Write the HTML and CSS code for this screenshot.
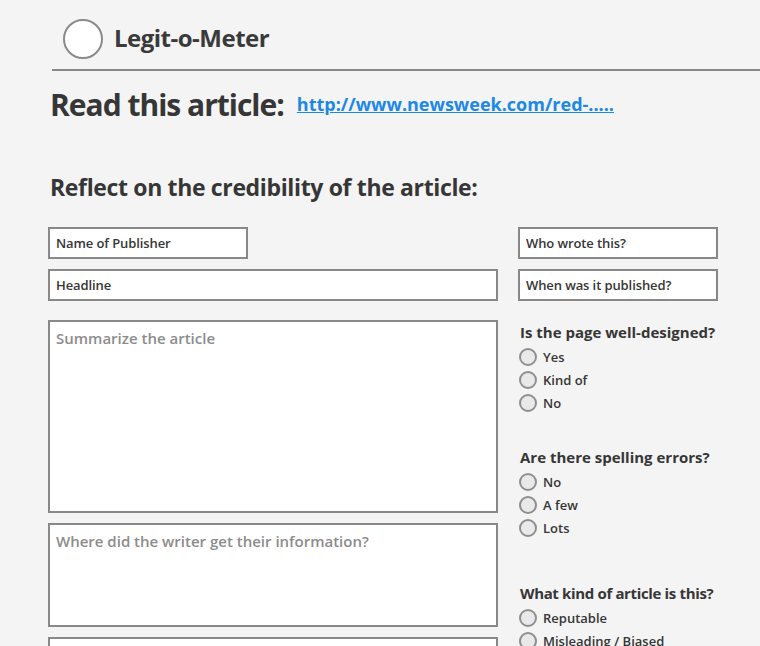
FILE: index.html
```html
<!DOCTYPE html>
<html>
<head>
<meta charset="utf-8">
<link rel="stylesheet" href="styles.css">
</head>
<body>
<header class="top">
  <span class="logo"></span>
  <h1 class="brand">Legit-o-Meter</h1>
</header>
<main class="page">
  <div class="read">
    <h2 class="read-title">Read this article:</h2>
    <a class="read-link" href="#">http://www.newsweek.com/red-.....</a>
  </div>
  <h3 class="reflect">Reflect on the credibility of the article:</h3>
  <div class="cols">
    <div class="left">
      <input class="field short" type="text" value="Name of Publisher">
      <input class="field" type="text" value="Headline">
      <textarea class="area tall" placeholder="Summarize the article"></textarea>
      <textarea class="area mid" placeholder="Where did the writer get their information?"></textarea>
      <textarea class="area mid" placeholder=""></textarea>
    </div>
    <div class="right">
      <input class="field" type="text" value="Who wrote this?">
      <input class="field" type="text" value="When was it published?">
      <div class="q q1">
        <div class="q-title">Is the page well-designed?</div>
        <label class="opt"><span class="radio"></span>Yes</label>
        <label class="opt"><span class="radio"></span>Kind of</label>
        <label class="opt"><span class="radio"></span>No</label>
      </div>
      <div class="q q2">
        <div class="q-title">Are there spelling errors?</div>
        <label class="opt"><span class="radio"></span>No</label>
        <label class="opt"><span class="radio"></span>A few</label>
        <label class="opt"><span class="radio"></span>Lots</label>
      </div>
      <div class="q q3">
        <div class="q-title tight">What kind of article is this?</div>
        <label class="opt"><span class="radio"></span>Reputable</label>
        <label class="opt"><span class="radio"></span>Misleading / Biased</label>
      </div>
    </div>
  </div>
</main>
</body>
</html>
```
FILE: styles.css
```css
* { box-sizing: border-box; }
html, body { margin: 0; padding: 0; }
body {
  background: #f4f4f4;
  color: #363636;
  font-family: "Open Sans", "Noto Sans", sans-serif;
  width: 760px;
  height: 646px;
  overflow: hidden;
}
.top {
  display: flex;
  align-items: center;
  margin-left: 52px;
  padding: 19px 0 10px 11px;
  border-bottom: 2px solid #888;
}
.logo {
  width: 40px;
  height: 40px;
  border-radius: 50%;
  border: 2px solid #8a8a8a;
  background: #fff;
  flex: none;
}
.brand {
  margin: 0 0 0 11px;
  padding-bottom: 4px;
  font-size: 24px;
  font-weight: 700;
  letter-spacing: -0.5px;
  color: #3a3a3a;
}
.page {
  padding: 13px 0 0 48px;
}
.read {
  display: flex;
  align-items: center;
  gap: 13px;
  padding-left: 2px;
}
.read-title {
  margin: 0;
  font-size: 30px;
  font-weight: 700;
  letter-spacing: -1px;
  color: #363636;
}
.read-link {
  color: #1e88e5;
  font-size: 18px;
  font-weight: 700;
  letter-spacing: 0;
  margin-bottom: 2px;
}
.reflect {
  margin: 46px 0 24px 2px;
  font-size: 23px;
  font-weight: 700;
  letter-spacing: -0.35px;
  color: #363636;
}
.cols {
  display: flex;
  gap: 20px;
}
.left { width: 450px; display: flex; flex-direction: column; }
.right { width: 200px; display: flex; flex-direction: column; }
.field {
  display: block;
  height: 32px;
  width: 100%;
  border: 2px solid #888;
  background: #fff;
  padding: 0 6px;
  font-family: inherit;
  font-size: 13px;
  font-weight: 600;
  letter-spacing: -0.1px;
  color: #363636;
  margin: 0 0 10px 0;
  outline: none;
}
.field.short { width: 200px; }
.area {
  display: block;
  width: 100%;
  border: 2px solid #888;
  background: #fff;
  padding: 6px 6px;
  font-family: inherit;
  font-size: 15px;
  font-weight: 600;
  color: #363636;
  resize: none;
  outline: none;
  margin: 0 0 10px 0;
}
.area::placeholder { color: #8c8c8c; }
.left .field + .area { margin-top: 9px; }
.tall { height: 193px; }
.mid { height: 104px; }
.q { display: flex; flex-direction: column; }
.q1 { margin-top: 11px; }
.q2 { margin-top: 33px; }
.q3 { margin-top: 44px; }
.q-title {
  font-size: 15px;
  font-weight: 700;
  letter-spacing: 0;
  color: #363636;
  padding-left: 2px;
  margin-bottom: 3px;
  white-space: nowrap;
}
.q-title.tight { letter-spacing: -0.35px; }
.opt {
  display: flex;
  align-items: center;
  height: 23px;
  font-size: 13px;
  font-weight: 600;
  color: #363636;
}
.radio {
  width: 18px;
  height: 18px;
  border-radius: 50%;
  border: 2px solid #8f8f8f;
  background: #e9e9e9;
  margin: 0 6px 0 1px;
  flex: none;
}
```
